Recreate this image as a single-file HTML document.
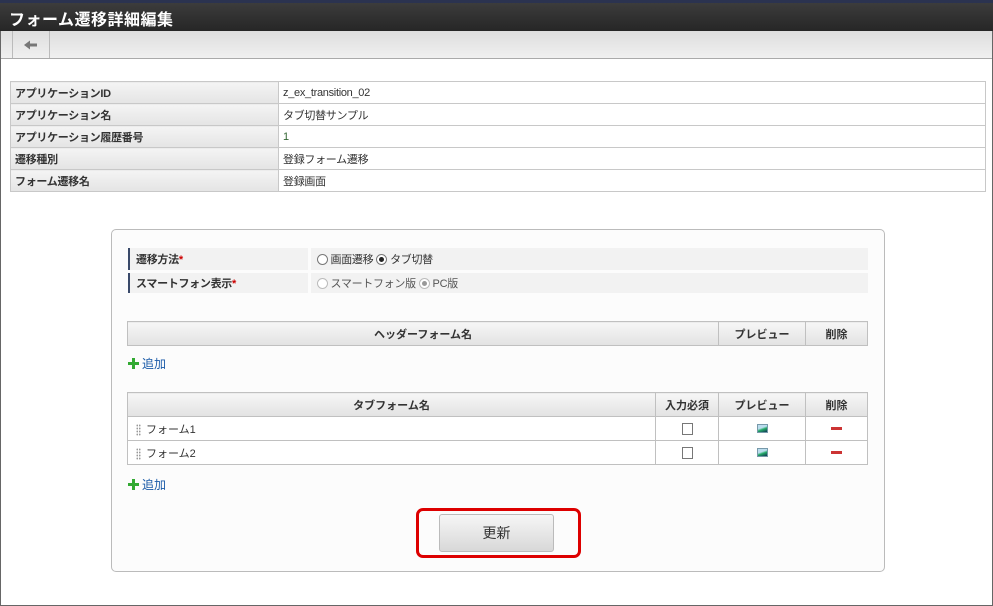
<!DOCTYPE html>
<html><head><meta charset="utf-8"><style>
*{box-sizing:border-box;margin:0;padding:0}
body{width:993px;height:606px;position:relative;background:#fff;font-family:"Liberation Sans","Noto Sans CJK JP",sans-serif;font-size:11px;color:#333;overflow:hidden}
.a{position:absolute}
.frame{left:0;top:0;width:993px;height:606px;border:1px solid #666;border-top:none}
.title{left:0;top:0;width:993px;height:31px;background:linear-gradient(#3c3c3c,#262626);border-top:3px solid #2b3350;color:#fff;font-size:16px;font-weight:bold;padding:3px 0 0 9px;letter-spacing:0.5px}
.tool{left:1px;top:31px;width:991px;height:28px;background:linear-gradient(#dedede,#f0f0f0);border-bottom:1px solid #aaa}
.back{left:12px;top:31px;width:38px;height:27px;border-left:1px solid #bbb;border-right:1px solid #bbb}
table{border-collapse:collapse;position:absolute}
.info td{border:1px solid #c8c8c8;height:22px;padding:0 4px;font-size:11px;letter-spacing:-0.3px}
.info td.l{background:linear-gradient(#f4f4f4,#e4e4e4);width:268px;font-weight:bold;color:#333}
.info{left:10px;top:81px;width:976px;border:1px solid #bbb}
.panel{left:111px;top:229px;width:774px;height:343px;border:1px solid #bbb;border-radius:5px;background:#fcfcfc}
.frm td{height:23px;background:#f2f2f2;border-bottom:3px solid #fcfcfc;padding:0 6px;letter-spacing:-0.3px}
.frm td.l{border-left:2px solid #3a4a6a;font-weight:bold;width:180px;border-right:3px solid #fcfcfc}
.g td,.g th{border:1px solid #c0c0c0;height:24px;text-align:center;font-size:11px}
.g th{background:linear-gradient(#f6f6f6,#e2e2e2);font-weight:bold;color:#333}
.g td{background:#fff}
.g td.n{text-align:left;padding-left:8px}
.add{color:#1a5aa8;font-size:12px}
.plus{display:inline-block;width:11px;height:11px;position:relative;vertical-align:-1px;margin-right:3px}
.plus:before{content:"";position:absolute;left:4px;top:0;width:3px;height:11px;background:#3a3}
.plus:after{content:"";position:absolute;left:0;top:4px;width:11px;height:3px;background:#3a3}
.rad{display:inline-block;width:11px;height:11px;border:1px solid #777;border-radius:50%;vertical-align:-2px;position:relative;background:#fff;margin-right:3px}
.rad.on:after{content:"";position:absolute;left:2px;top:2px;width:5px;height:5px;border-radius:50%;background:#222}
.rad.dis{border-color:#bbb}.rad.dis.on:after{background:#999}
.chk{display:inline-block;width:11px;height:12px;border:1px solid #777;background:#fff;vertical-align:middle}
.pv{display:inline-block;width:11px;height:9px;background:linear-gradient(160deg,#bde 40%,#2a6 60%,#135);border:1px solid #79a;vertical-align:middle}
.del{display:inline-block;width:11px;height:3px;background:#c33;vertical-align:middle}
.drag{display:inline-block;width:5px;height:12px;background:radial-gradient(circle,#999 0.8px,transparent 1px) 0 0/2.5px 3px;vertical-align:middle;margin-right:5px}
.red{left:416px;top:508px;width:165px;height:50px;border:3px solid #d00;border-radius:7px}
.btn{left:439px;top:514px;width:115px;height:38px;border:1px solid #bbb;border-radius:3px;background:linear-gradient(#f6f6f6,#d8d8d8);text-align:center;line-height:36px;font-size:14px;color:#333}
.req{color:#c00}
</style></head><body>
<div class="a frame"></div>
<div class="a title">フォーム遷移詳細編集</div>
<div class="a tool"></div>
<div class="a back"><svg width="38" height="27"><path d="M14 14h10" stroke="#777" stroke-width="3"/><path d="M11 14l6-4.5v9z" fill="#777"/></svg></div>
<table class="info">
<tr><td class="l">アプリケーションID</td><td>z_ex_transition_02</td></tr>
<tr><td class="l">アプリケーション名</td><td>タブ切替サンプル</td></tr>
<tr><td class="l">アプリケーション履歴番号</td><td style="color:#363">1</td></tr>
<tr><td class="l">遷移種別</td><td>登録フォーム遷移</td></tr>
<tr><td class="l">フォーム遷移名</td><td>登録画面</td></tr>
</table>
<div class="a panel"></div>
<table class="frm" style="left:128px;top:248px;width:740px">
<tr><td class="l">遷移方法<span class="req">*</span></td><td><span class="rad"></span>画面遷移 <span class="rad on"></span>タブ切替</td></tr>
<tr><td class="l">スマートフォン表示<span class="req">*</span></td><td style="color:#555"><span class="rad dis"></span>スマートフォン版 <span class="rad dis on"></span>PC版</td></tr>
</table>
<table class="g" style="left:127px;top:321px;width:741px">
<tr><th>ヘッダーフォーム名</th><th style="width:87px">プレビュー</th><th style="width:62px">削除</th></tr>
</table>
<div class="a add" style="left:128px;top:355px"><span class="plus"></span>追加</div>
<table class="g" style="left:127px;top:392px;width:741px">
<tr><th>タブフォーム名</th><th style="width:63px">入力必須</th><th style="width:87px">プレビュー</th><th style="width:62px">削除</th></tr>
<tr><td class="n"><span class="drag"></span>フォーム1</td><td><span class="chk"></span></td><td><span class="pv"></span></td><td><span class="del"></span></td></tr>
<tr><td class="n"><span class="drag"></span>フォーム2</td><td><span class="chk"></span></td><td><span class="pv"></span></td><td><span class="del"></span></td></tr>
</table>
<div class="a add" style="left:128px;top:476px"><span class="plus"></span>追加</div>
<div class="a red"></div>
<div class="a btn">更新</div>
</body></html>
